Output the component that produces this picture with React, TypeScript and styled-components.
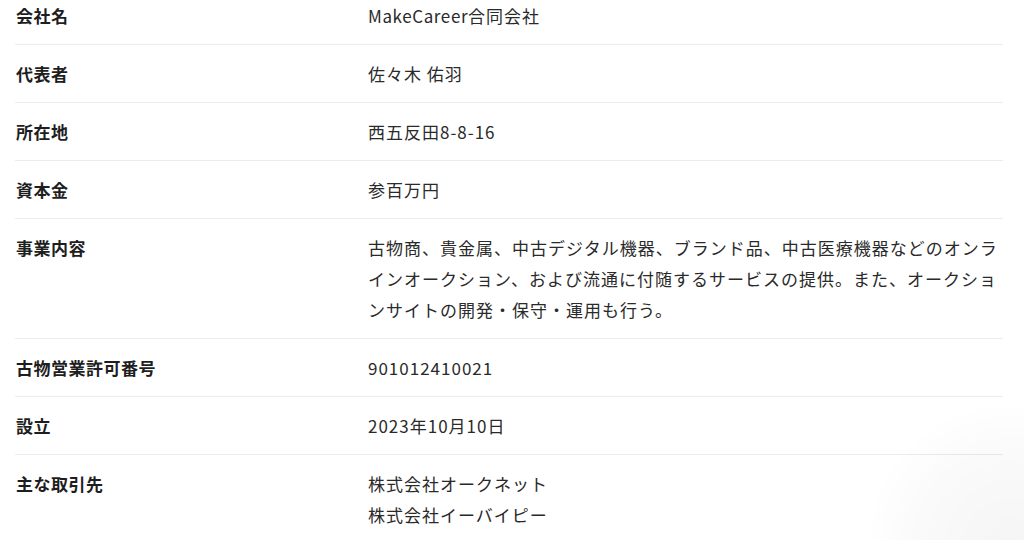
import React from "react";
import styled, { createGlobalStyle } from "styled-components";

const GlobalStyle = createGlobalStyle`
  html, body {
    margin: 0;
    padding: 0;
    background: #ffffff;
    overflow: hidden;
  }
  body {
    font-family: "Noto Sans CJK JP", "Noto Sans", sans-serif;
    color: #222;
  }
`;

const Wrapper = styled.div`
  padding: 0 21px 0 15px;
`;

const Table = styled.dl`
  margin: 0;
  padding: 0;
`;

const Row = styled.div<{ $first?: boolean }>`
  display: grid;
  grid-template-columns: 353px 1fr;
  padding: ${(p) => (p.$first ? "0 0 13px" : "13px 0")};
  border-bottom: 1px solid #ececec;
  font-size: 17px;
  line-height: 31px;
  letter-spacing: 1px;
`;

const Label = styled.dt`
  margin: 0;
  padding-left: 1px;
  font-weight: 700;
  color: #1e1e1e;
  letter-spacing: 0.5px;
`;

const Value = styled.dd`
  margin: 0;
  color: #2a2a2a;
  font-weight: 400;
`;

const Latin = styled.span`
  letter-spacing: 0.6px;
`;

const CornerGlow = styled.div`
  position: fixed;
  right: -130px;
  bottom: -150px;
  width: 290px;
  height: 290px;
  border-radius: 50%;
  background: radial-gradient(circle, rgba(0, 0, 0, 0.04) 0%, rgba(0, 0, 0, 0.02) 45%, rgba(0, 0, 0, 0) 70%);
  pointer-events: none;
`;

const rows: { label: string; value: React.ReactNode[] }[] = [
  { label: "会社名", value: [<><Latin>MakeCareer</Latin>合同会社</>] },
  { label: "代表者", value: ["佐々木 佑羽"] },
  { label: "所在地", value: ["西五反田8-8-16"] },
  { label: "資本金", value: ["参百万円"] },
  {
    label: "事業内容",
    value: [
      "古物商、貴金属、中古デジタル機器、ブランド品、中古医療機器などのオンラインオークション、および流通に付随するサービスの提供。また、オークションサイトの開発・保守・運用も行う。",
    ],
  },
  { label: "古物営業許可番号", value: ["901012410021"] },
  { label: "設立", value: ["2023年10月10日"] },
  { label: "主な取引先", value: ["株式会社オークネット", "株式会社イーバイピー"] },
];

export default function App() {
  return (
    <>
      <GlobalStyle />
      <Wrapper>
        <Table>
          {rows.map((row, i) => (
            <Row key={row.label} $first={i === 0}>
              <Label>{row.label}</Label>
              <Value>
                {row.value.map((line, j) => (
                  <div key={j}>{line}</div>
                ))}
              </Value>
            </Row>
          ))}
        </Table>
      </Wrapper>
      <CornerGlow />
    </>
  );
}
